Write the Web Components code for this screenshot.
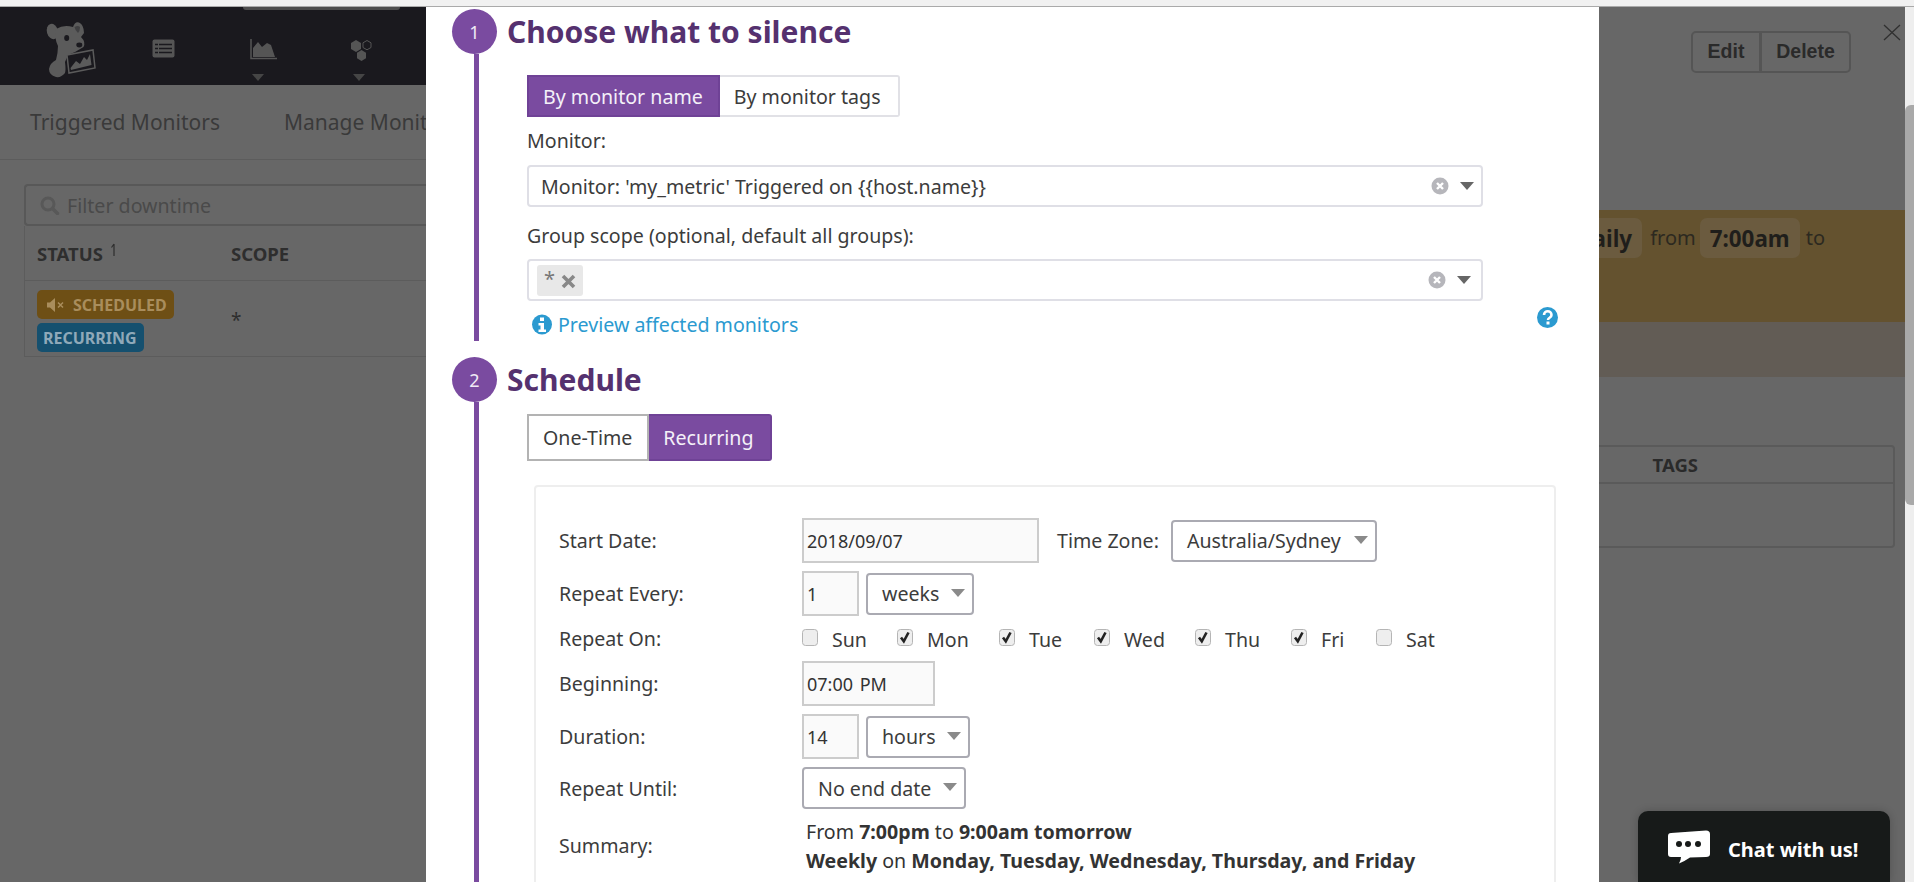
<!DOCTYPE html>
<html>
<head>
<meta charset="utf-8">
<title>Downtime</title>
<style>
    html, body { margin: 0; height: 100%; overflow: hidden; }
    body { font-family: "Noto Sans", "Open Sans", sans-serif; color: #3c3c3c; }
</style>
</head>
<body>
<dd-window></dd-window>
<script>
// every element just renders its markup into an open shadow root
class Base extends HTMLElement {
    constructor() {
        super();
        this.attachShadow({ mode: 'open' });
    }
    connectedCallback() {
        this.shadowRoot.innerHTML = this.render();
    }
    attr(name, fallback = '') {
        return this.hasAttribute(name) ? this.getAttribute(name) : fallback;
    }
}

class DdWindow extends Base {
    render() {
        return `
            <style>
                :host { display: flex; flex-direction: column; height: 100vh; overflow: hidden; background: #f1f1f1; }
                .strip { height: 6px; flex: none; border-bottom: 1px solid #aaa; }
                .row { flex: 1; display: flex; min-height: 0; }
                .main { flex: 1; position: relative; display: flex; background: #676767; overflow: hidden; }
                .bar { width: 9px; flex: none; background: #eee; border-radius: 6px 0 0 6px; padding-top: 98px; box-sizing: border-box; }
                .thumb { height: 400px; background: #a9a9a9; border-radius: 6px 0 0 6px; }
            </style>
            <div class="strip"></div>
            <div class="row">
                <div class="main">
                    <dd-list-pane></dd-list-pane>
                    <dd-detail-pane></dd-detail-pane>
                    <dd-silence-modal></dd-silence-modal>
                    <dd-chat></dd-chat>
                </div>
                <div class="bar"><div class="thumb"></div></div>
            </div>
        `;
    }
}

class DdNav extends Base {
    render() {
        return `
            <style>
                :host { display: flex; height: 78px; background: #1a191e; position: relative; }
                .logo { width: 110px; height: 78px; margin-left: 20px; flex: none; }
                .item { display: flex; flex-direction: column; padding-top: 32px; flex: none; }
                .caret { width: 0; height: 0; border: 6px solid transparent; border-top: 7px solid #454545; border-bottom: 0; margin-top: 14px; }
                .tip { position: absolute; left: 243px; top: 0; width: 157px; height: 3px; background: #4d4d4d; border-radius: 0 0 4px 4px; }
            </style>
            <div class="tip"></div>
            <svg class="logo" viewBox="0 7 110 78">
                <g fill="#5b5b5b">
                    <ellipse cx="32.5" cy="31.5" rx="5.6" ry="7.8" transform="rotate(-15 32.5 31.5)"/>
                    <path d="M36 29 Q44 24 53 27 Q55 21 59 22.500 Q64 25 64 33 L61 37 Q66 42 63.500 47 Q56 52 48 55 L45 62 Q46 70 45 73 Q41 78 36 77 Q29 75 29 69 Q30 63 36 60 Q38 52 38 46 Q34 38 36 29Z"/>
                </g>
                <path d="M54.500 27 Q58 25 60 27 Q60 31 58 33 Q55 30 54.500 27Z" fill="#1a191e" opacity="0.4"/>
                <ellipse cx="46.700" cy="38" rx="2.500" ry="3" fill="#1a191e"/>
                <ellipse cx="59.300" cy="45" rx="3" ry="2.400" fill="#1a191e"/>
                <path d="M47 55 L73 50 L75 68 L49 73Z" fill="#1a191e" stroke="#5b5b5b" stroke-width="1.500"/>
                <path d="M50.500 68 L56 61 L60 64 L64 57 L67 60 L70 54 L71.500 65 L51 70Z" fill="#5b5b5b"/>
            </svg>
            <div class="item" style="margin-left:22px;width:98px">
                <svg width="23" height="19" viewBox="0 0 23 19">
                    <rect x="0.500" y="0.500" width="22" height="18" rx="2" fill="#555"/>
                    <path d="M3 5.500h17M3 9.500h17M3 13.500h17" stroke="#1a191e" stroke-width="1.500"/>
                    <path d="M6.500 4v11" stroke="#555" stroke-width="1"/>
                </svg>
            </div>
            <div class="item" style="width:100px">
                <svg width="27" height="21" viewBox="0 0 27 21">
                    <path d="M1 0v19.500h26" fill="none" stroke="#555" stroke-width="1.500"/>
                    <path d="M3 18V9 L8 3 L12 8 L17 4 L21 6 L25 18Z" fill="#555"/>
                </svg>
                <div class="caret" style="margin-left:2px"></div>
            </div>
            <div class="item" style="width:60px">
                <svg width="22" height="22" viewBox="0 0 22 22">
                    <path d="M6 1l5 3v6l-5 3-5-3V4z" fill="#555"/>
                    <path d="M17 1.500l4 2.300v4.700l-4 2.300-4-2.300V3.800z" fill="none" stroke="#555" stroke-width="1"/>
                    <path d="M11.500 11l4.500 2.700v5.500L11.500 22 7 19.200v-5.500z" fill="#555"/>
                </svg>
                <div class="caret" style="margin-left:3px;margin-top:13px"></div>
            </div>
        `;
    }
}

class DdBadge extends Base {
    render() {
        return `
            <style>
                :host { display: inline-flex; align-items: center; height: 29px; padding: 0 7px 0 6px; border-radius: 5px; font-size: 16px; font-weight: 700; background: var(--badge-bg); color: var(--badge-fg); width: fit-content; }
            </style>
            <slot></slot>
        `;
    }
}

class DdListPane extends Base {
    render() {
        return `
            <style>
                :host { display: block; width: 1000px; flex: none; }
                .tabs { display: flex; height: 74px; align-items: center; padding-left: 30px; border-bottom: 1px solid #5c5c5c; font-size: 21px; color: #3a3a3a; white-space: nowrap; }
                .tabs span + span { margin-left: 64px; }
                .filter { display: flex; align-items: center; height: 42px; margin: 24px 0 0 24px; box-sizing: border-box; border: 2px solid #585858; border-right: 0; border-radius: 4px 0 0 4px; padding-left: 14px; gap: 7px; font-size: 19.6px; color: #4a4a4a; }
                .table { margin-left: 24px; border-left: 1px solid #5c5c5c; border-bottom: 1px solid #5c5c5c; }
                .row { display: grid; grid-template-columns: 206px 1fr; }
                .head { height: 54px; align-items: center; border-bottom: 1px solid #5c5c5c; font-size: 18.500px; font-weight: 700; color: #2e2e2e; }
                .head > div:first-child, .cell { padding-left: 12px; }
                .head > div:first-child { display: flex; align-items: center; }
                .arrow { margin: -8px 0 0 8px; }
                .body { height: 75px; }
                .stack { display: flex; flex-direction: column; gap: 4px; padding-top: 9px; }
                .star { align-self: center; padding-top: 2px; font-size: 19px; color: #2e2e2e; }
                svg { flex: none; }
                .mute { margin-right: 8px; }
            </style>
            <dd-nav></dd-nav>
            <div class="tabs"><span>Triggered Monitors</span><span>Manage Monitors</span></div>
            <div class="filter">
                <svg width="20" height="19" viewBox="0 0 20 19"><circle cx="8" cy="8" r="6" fill="none" stroke="#585858" stroke-width="3"/><path d="M12.500 12.500l5 5" stroke="#585858" stroke-width="3.500" stroke-linecap="round"/></svg>
                <span>Filter downtime</span>
            </div>
            <div class="table">
                <div class="row head">
                    <div>STATUS<svg class="arrow" width="5" height="13" viewBox="0 0 5 13"><path d="M3 13V1M3 1L.5 4.500" fill="none" stroke="#2e2e2e" stroke-width="1.200"/></svg></div>
                    <div>SCOPE</div>
                </div>
                <div class="row body">
                    <div class="cell stack">
                        <dd-badge style="--badge-bg:#6e4f15;--badge-fg:#a98d5c;padding-left:10px">
                            <svg class="mute" width="18" height="14" viewBox="0 0 18 14" style="vertical-align:-2px"><path d="M0 4.500h3L8 0v14L3 9.500H0z" fill="#a98d5c"/><path d="M11 4.500l5 5M16 4.500l-5 5" stroke="#a98d5c" stroke-width="1.500"/></svg>SCHEDULED
                        </dd-badge>
                        <dd-badge style="--badge-bg:#15506f;--badge-fg:#8fa9b9">RECURRING</dd-badge>
                    </div>
                    <div class="star">*</div>
                </div>
            </div>
        `;
    }
}

class DdDetailPane extends Base {
    render() {
        return `
            <style>
                :host { display: block; flex: 1; min-width: 0; padding-top: 24px; position: relative; }
                .actions { display: flex; justify-content: flex-end; margin-right: 54px; }
                .group { display: flex; height: 42px; box-sizing: border-box; border: 2px solid #555; border-radius: 5px; font: 700 19.500px "Liberation Sans", Arial, sans-serif; color: #2a2a2a; }
                .group span { display: flex; align-items: center; justify-content: center; padding-bottom: 2px; }
                .group span + span { border-left: 3px solid #555; }
                .close { position: absolute; top: 17px; right: 4px; }
                .band { margin-top: 137px; height: 112px; box-sizing: border-box; background: #64522f; display: flex; justify-content: flex-end; align-items: flex-start; padding: 8px 74px 0 0; font-size: 20px; color: #2c2920; white-space: nowrap; }
                .pill { display: flex; align-items: center; height: 40px; padding: 0 10px; border-radius: 7px; background: #6b5b3f; font-weight: 700; font-size: 22.400px; color: #1f1e1b; }
                .word { line-height: 40px; margin: 0 6px; }
                .word.from { margin: 0 4px 0 8px; }
                .beige { height: 55px; background: #625c55; }
                .table { margin: 68px 10px 0 100px; border: 2px solid #5a5a5a; border-radius: 4px; }
                .th { height: 35px; display: flex; justify-content: flex-end; align-items: center; padding-right: 195px; border-bottom: 2px solid #5a5a5a; font-size: 18.500px; font-weight: 700; color: #2a2a2a; }
                .td { height: 62px; }
            </style>
            <div class="actions">
                <div class="group"><span style="width:66px">Edit</span><span style="width:87px">Delete</span></div>
            </div>
            <svg class="close" width="18" height="17" viewBox="0 0 18 17"><path d="M1 1l16 15M17 1L1 16" stroke="#303030" stroke-width="1.300" fill="none"/></svg>
            <div class="band">
                <div class="pill">Daily</div><span class="word from">from</span><div class="pill">7:00am</div><span class="word">to</span>
            </div>
            <div class="beige"></div>
            <div class="table">
                <div class="th">TAGS</div>
                <div class="td"></div>
            </div>
        `;
    }
}

class DdStep extends Base {
    render() {
        return `
            <style>
                :host { display: grid; grid-template-columns: 45px 1fr; column-gap: 10px; }
                .rail { display: flex; flex-direction: column; }
                .dot { width: 45px; height: 45px; border-radius: 50%; background: #7a4ba0; color: #f0eaf5; display: flex; align-items: center; justify-content: center; font-size: 18px; flex: none; }
                .line { flex: 1; width: 5px; margin-left: 22px; background: #7a4ba0; }
                h2 { margin: 0; height: 45px; line-height: 45px; font-size: 30px; font-weight: 700; color: #55316f; white-space: nowrap; }
                .body { padding-left: 20px; }
            </style>
            <div class="rail"><div class="dot">${this.attr('number')}</div><div class="line"></div></div>
            <div>
                <h2>${this.attr('title')}</h2>
                <div class="body"><slot></slot></div>
            </div>
        `;
    }
}

class DdToggle extends Base {
    render() {
        const active = this.attr('active');
        const buttons = this.attr('options').split('|').map(label =>
            `<span class="${label === active ? 'on' : ''}">${label}</span>`).join('');
        return `
            <style>
                :host { display: inline-flex; height: var(--toggle-h, 42px); font-size: 19.600px; color: #3c3c3c; vertical-align: top; }
                span { display: flex; align-items: center; padding: 0 15px 0 14px; box-sizing: border-box; border: 2px solid var(--toggle-line, #e1e1e6); white-space: nowrap; }
                span:first-child { border-radius: 3px 0 0 3px; border-right: 0; }
                span:last-child { border-radius: 0 3px 3px 0; border-left: 0; padding-right: 17px; }
                .on { background: #7a4ba0; color: #f4f0f8; border-color: #6f4296; }
            </style>
            ${buttons}
        `;
    }
}

class DdCombo extends Base {
    render() {
        return `
            <style>
                :host { display: flex; align-items: center; width: 956px; height: 42px; box-sizing: border-box; border: 2px solid #dfdfe6; border-radius: 4px; font-size: 19.600px; color: #3c3c3c; position: relative; }
                .value { flex: 1; min-width: 0; padding-left: 12px; white-space: nowrap; }
                .clear { flex: none; }
                .arrow { flex: none; width: 0; height: 0; border: 7px solid transparent; border-top: 8px solid #666; border-bottom: 0; margin: 0 var(--combo-right, 7px) 0 11px; }
            </style>
            <div class="value"><slot></slot></div>
            <svg class="clear" width="18" height="18" viewBox="0 0 18 18"><circle cx="9" cy="9" r="8.500" fill="#b6b6bb"/><path d="M6 6l6 6M12 6l-6 6" stroke="#fff" stroke-width="2.400"/></svg>
            <div class="arrow"></div>
        `;
    }
}

class DdToken extends Base {
    render() {
        return `
            <style>
                :host { display: inline-flex; align-items: center; gap: 6px; height: 31px; padding: 0 7px; margin-left: -4px; border-radius: 3px; background: #e8e8e8; color: #777; font-size: 20px; vertical-align: middle; }
                svg { margin-top: 2px; }
                span { position: relative; top: -2px; }
            </style>
            <span><slot></slot></span>
            <svg width="15" height="15" viewBox="0 0 15 15"><path d="M2 2l11 11M13 2L2 13" stroke="#888" stroke-width="3.600"/></svg>
        `;
    }
}

class DdField extends Base {
    render() {
        return `
            <style>
                :host { display: grid; grid-template-columns: 243px 1fr; align-items: center; height: var(--row-h, 45px); font-size: 19.600px; color: #3c3c3c; }
                .controls { display: flex; align-items: center; gap: 7px; }
            </style>
            <div>${this.attr('label')}</div>
            <div class="controls"><slot></slot></div>
        `;
    }
}

class DdInput extends Base {
    render() {
        return `
            <style>
                :host { display: flex; align-items: center; height: 45px; width: ${this.attr('width')}px; box-sizing: border-box; border: 2px solid #ccc; background: #fafafa; padding-left: 3px; font-size: 18px; word-spacing: 2px; color: #333; white-space: nowrap; flex: none; }
            </style>
            <slot></slot>
        `;
    }
}

class DdSelect extends Base {
    render() {
        return `
            <style>
                :host { display: flex; align-items: center; height: 42px; width: ${this.attr('width')}px; box-sizing: border-box; border: 2px solid #aaaab2; border-radius: 4px; padding-left: 14px; font-size: 19.600px; color: #3c3c3c; white-space: nowrap; position: relative; flex: none; background: #fff; }
                .arrow { position: absolute; right: 7px; top: 14px; width: 0; height: 0; border: 7px solid transparent; border-top: 8px solid #8a8a8a; border-bottom: 0; }
            </style>
            <slot></slot>
            <div class="arrow"></div>
        `;
    }
}

class DdCheck extends Base {
    render() {
        const mark = this.hasAttribute('checked')
            ? '<path d="M4 8.500l2.800 3.800 4.700-8.800" fill="none" stroke="#222" stroke-width="2.600"/>' : '';
        return `
            <style>
                :host { display: flex; align-items: center; width: ${this.attr('width')}px; flex: none; font-size: 19.600px; color: #3c3c3c; padding-top: 2px; }
                svg { flex: none; margin: -5px 14px 0 0; }
            </style>
            <svg width="16" height="17" viewBox="0 0 16 17">
                <rect x="0.500" y="0.500" width="15" height="16" rx="3" fill="#eee" stroke="#b5b5b5"/>
                ${mark}
            </svg>
            <slot></slot>
        `;
    }
}

class DdSilenceModal extends Base {
    render() {
        return `
            <style>
                :host { position: absolute; left: 426px; top: 0; bottom: 0; width: 1173px; background: #fff; overflow: hidden; padding: 2px 0 0 26px; box-sizing: border-box; color: #3c3c3c; font-size: 19.600px; }
                .first { padding-bottom: 16px; }
                .label { display: flex; align-items: center; height: 48px; padding-bottom: 2px; box-sizing: border-box; }
                .label.tall { height: 52px; padding: 4px 0 0; }
                .preview { display: flex; justify-content: space-between; align-items: flex-start; margin: 6px 0 0 5px; height: 34px; width: 1026px; }
                .link { display: flex; align-items: center; gap: 6px; height: 34px; color: #2b9ad0; }
                .panel { margin: 24px 0 0 7px; width: 1022px; box-sizing: border-box; border: 2px solid #eee; border-radius: 4px; padding: 31px 0 0 23px; display: flex; flex-direction: column; gap: 8px; height: 600px; }
                .zone { margin-left: 11px; margin-right: 5px; white-space: nowrap; }
                .summary { line-height: 29px; padding: 1px 0 0 4px; white-space: nowrap; color: #333; }
                b { font-weight: 700; }
                .step2 { --toggle-h: 47px; --toggle-line: #b3b3b3; }
                .step2 dd-toggle { margin-top: 12px; }
                .first dd-toggle { margin-top: 21px; }
            </style>
            <dd-step class="first" number="1" title="Choose what to silence">
                <dd-toggle options="By monitor name|By monitor tags" active="By monitor name"></dd-toggle>
                <div class="label">Monitor:</div>
                <dd-combo>Monitor: 'my_metric' Triggered on {{host.name}}</dd-combo>
                <div class="label tall">Group scope (optional, default all groups):</div>
                <dd-combo style="--combo-right:10px"><dd-token>*</dd-token></dd-combo>
                <div class="preview">
                    <div class="link">
                        <svg width="20" height="21" viewBox="0 0 20 21"><circle cx="10" cy="10.500" r="10" fill="#2b9ad0"/><rect x="8" y="3.500" width="4" height="3.500" fill="#fff"/><path d="M6.500 9h5.500v6.500h2V18H6.500v-2.500h2V11.500h-2z" fill="#fff"/></svg>
                        Preview affected monitors
                    </div>
                    <svg width="21" height="21" viewBox="0 0 21 21"><circle cx="10.500" cy="10.500" r="10.500" fill="#2b9ad0"/><path d="M7 8c0-5 7.500-5 7.500 0 0 3-3.500 2.500-3.500 5" fill="none" stroke="#fff" stroke-width="2.600"/><rect x="9.500" y="14.500" width="3" height="3" fill="#fff"/></svg>
                </div>
            </dd-step>
            <dd-step class="step2" number="2" title="Schedule">
                <dd-toggle options="One-Time|Recurring" active="Recurring"></dd-toggle>
                <div class="panel">
                    <dd-field label="Start Date:">
                        <dd-input width="237">2018/09/07</dd-input>
                        <span class="zone">Time Zone:</span>
                        <dd-select width="206">Australia/Sydney</dd-select>
                    </dd-field>
                    <dd-field label="Repeat Every:">
                        <dd-input width="57">1</dd-input>
                        <dd-select width="108">weeks</dd-select>
                    </dd-field>
                    <dd-field label="Repeat On:" style="--row-h:29px">
                        <div style="display:flex;gap:0;margin-right:-7px">
                            <dd-check width="95">Sun</dd-check>
                            <dd-check width="102" checked>Mon</dd-check>
                            <dd-check width="95" checked>Tue</dd-check>
                            <dd-check width="101" checked>Wed</dd-check>
                            <dd-check width="96" checked>Thu</dd-check>
                            <dd-check width="85" checked>Fri</dd-check>
                            <dd-check width="80">Sat</dd-check>
                        </div>
                    </dd-field>
                    <dd-field label="Beginning:"><dd-input width="133">07:00 PM</dd-input></dd-field>
                    <dd-field label="Duration:">
                        <dd-input width="57">14</dd-input>
                        <dd-select width="104">hours</dd-select>
                    </dd-field>
                    <dd-field label="Repeat Until:" style="--row-h:41px"><dd-select width="164">No end date</dd-select></dd-field>
                    <dd-field label="Summary:" style="--row-h:58px">
                        <div class="summary">From <b>7:00pm</b> to <b>9:00am tomorrow</b><br><b>Weekly</b> on <b>Monday, Tuesday, Wednesday, Thursday, and Friday</b></div>
                    </dd-field>
                </div>
            </dd-step>
        `;
    }
}

class DdChat extends Base {
    render() {
        return `
            <style>
                :host { position: absolute; right: 15px; bottom: 0; width: 252px; height: 71px; box-sizing: border-box; background: #171a19; border-radius: 10px 10px 0 0; color: #fff; font-size: 20px; font-weight: 700; display: flex; align-items: flex-start; padding: 19px 0 0 30px; gap: 18px; box-shadow: 0 0 8px rgba(0,0,0,0.2); }
                span { line-height: 40px; white-space: nowrap; }
            </style>
            <svg width="42" height="34" viewBox="0 0 42 34">
                <path d="M3 3L38 .5Q42 .5 42 4V24Q42 27 38 27L22 27.500Q17 31 11 33.500 13 30 13 27L3 27Q0 27 0 24V6Q0 3 3 3Z" fill="#fff"/>
                <circle cx="11" cy="14" r="3" fill="#171a19"/><circle cx="20" cy="14" r="3" fill="#171a19"/><circle cx="30" cy="14" r="3" fill="#171a19"/>
            </svg>
            <span>Chat with us!</span>
        `;
    }
}

customElements.define('dd-window', DdWindow);
customElements.define('dd-nav', DdNav);
customElements.define('dd-badge', DdBadge);
customElements.define('dd-list-pane', DdListPane);
customElements.define('dd-detail-pane', DdDetailPane);
customElements.define('dd-step', DdStep);
customElements.define('dd-toggle', DdToggle);
customElements.define('dd-combo', DdCombo);
customElements.define('dd-token', DdToken);
customElements.define('dd-field', DdField);
customElements.define('dd-input', DdInput);
customElements.define('dd-select', DdSelect);
customElements.define('dd-check', DdCheck);
customElements.define('dd-silence-modal', DdSilenceModal);
customElements.define('dd-chat', DdChat);
</script>
</body>
</html>
